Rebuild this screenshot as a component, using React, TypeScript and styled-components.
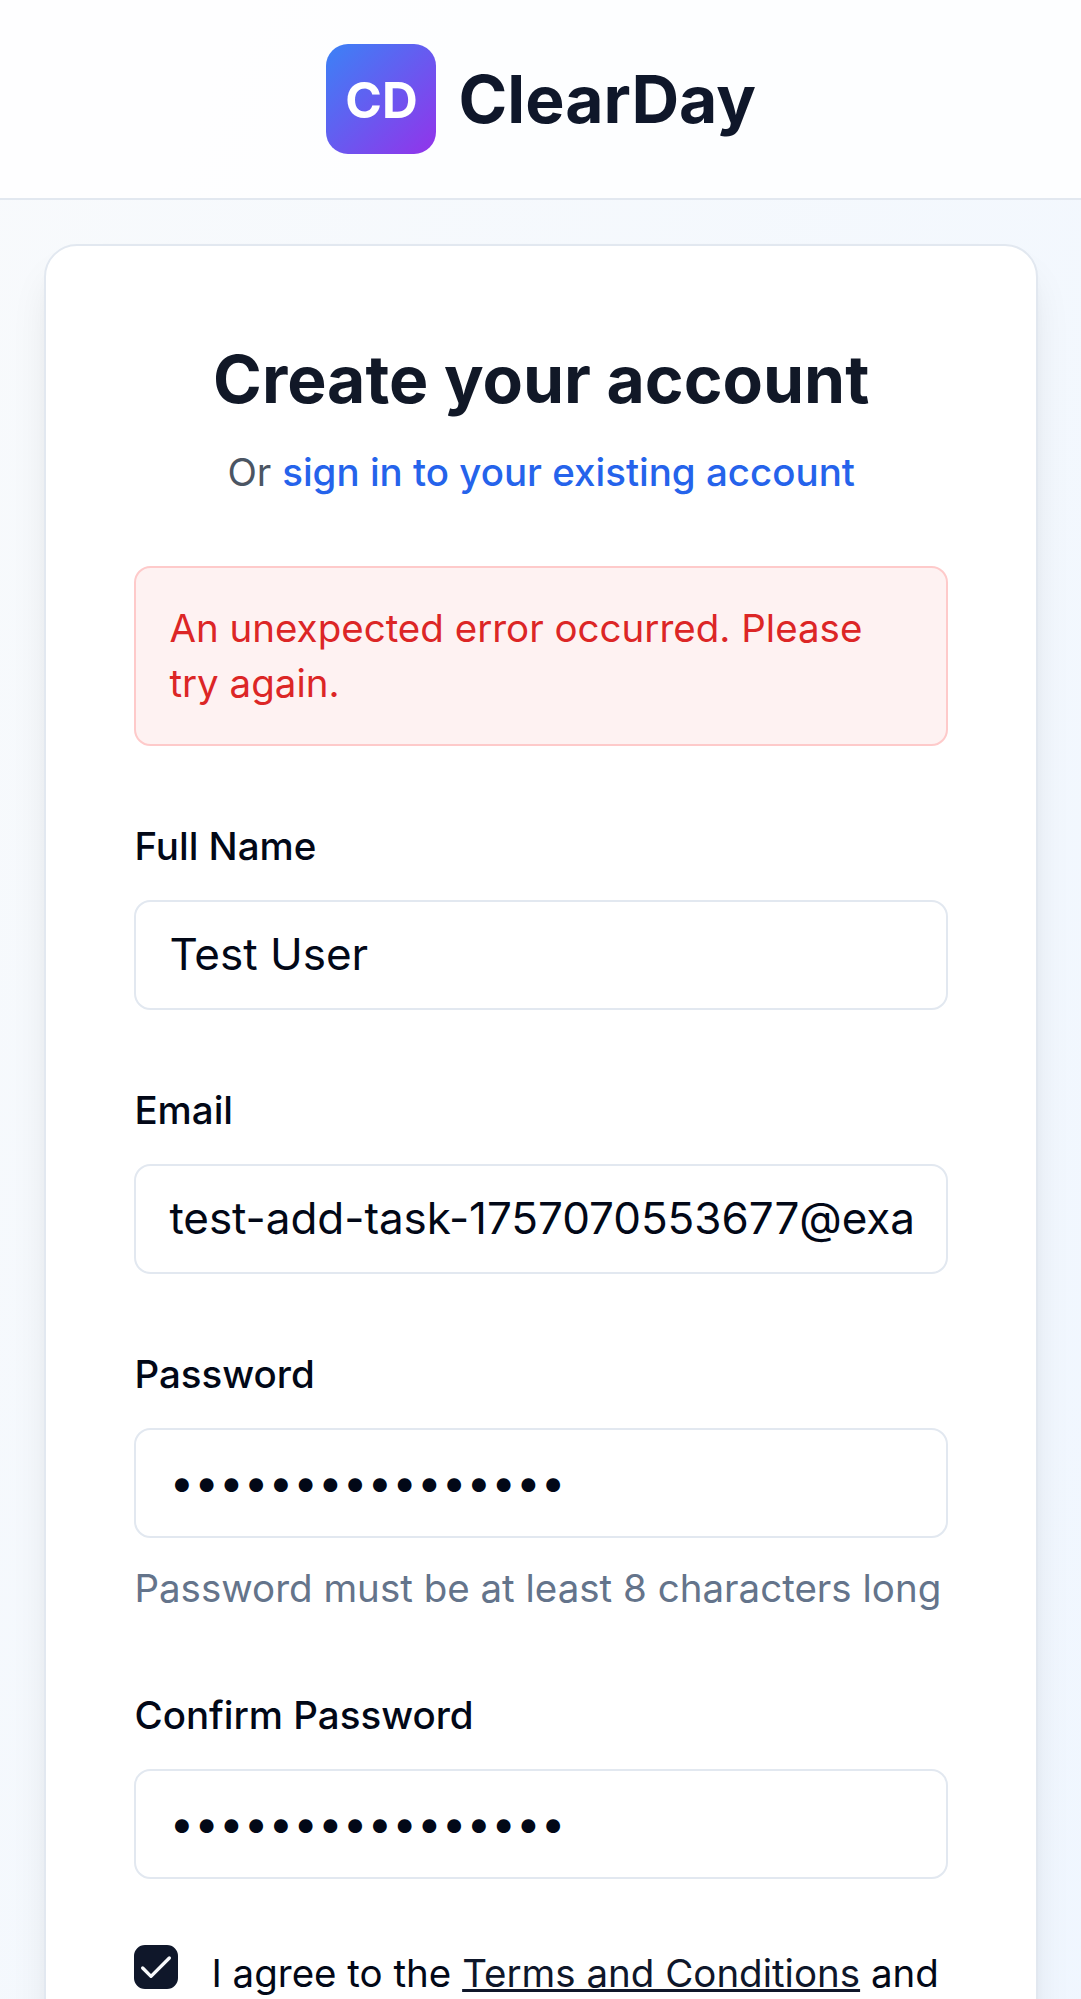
import React from "react";
import styled, { createGlobalStyle } from "styled-components";

const GlobalStyle = createGlobalStyle`
  *, *::before, *::after { box-sizing: border-box; }
  html, body { margin: 0; padding: 0; }
  body {
    font-family: Inter, "Liberation Sans", sans-serif;
    font-size: 44px;
    line-height: 66px;
    color: #020817;
  }
  h1, h2, p { margin: 0; }
`;

const Page = styled.div`
  height: 100vh;
  overflow: hidden;
  display: flex;
  flex-direction: column;
  background: linear-gradient(to bottom right, #f8fafc, #eff6ff) top left / 100% 2450px no-repeat;
`;

const Header = styled.header`
  flex: none;
  display: flex;
  align-items: flex-start;
  justify-content: center;
  gap: 22.5px;
  padding: 44px 44px 0 45px;
  height: 200px;
  background: rgba(255, 255, 255, 0.8);
  border-bottom: 2px solid #e2e8f0;
`;

const LogoMark = styled.div`
  display: flex;
  align-items: center;
  justify-content: center;
  width: 110px;
  height: 110px;
  padding: 2px 0 0 1px;
  border-radius: 22px;
  background: linear-gradient(to bottom right, #3b82f6, #9333ea);
  color: #fff;
  font-size: 49.5px;
  line-height: 77px;
  font-weight: 700;
`;

const BrandName = styled.h1`
  padding-top: 11px;
  font-size: 66px;
  line-height: 88px;
  font-weight: 700;
  color: #0f172a;
`;

const Main = styled.main`
  flex: none;
  padding: 44px 43px 44px 44px;
`;

const Card = styled.section`
  display: flex;
  flex-direction: column;
  gap: 66px;
  padding: 88.75px 88px 88px 88.4px;
  border: 2px solid #e2e8f0;
  border-radius: 33px;
  background: #fff;
  box-shadow: 0 27.5px 41.25px -8.25px rgba(0, 0, 0, 0.1),
    0 11px 16.5px -11px rgba(0, 0, 0, 0.1);
`;

const CardHeader = styled.div`
  display: flex;
  flex-direction: column;
  gap: 22px;
  text-align: center;
`;

const Title = styled.h2`
  font-size: 66px;
  line-height: 88px;
  font-weight: 700;
  color: #111827;
`;

const Subtitle = styled.p`
  font-size: 38.5px;
  line-height: 55px;
  color: #4b5563;
`;

const SignInLink = styled.a`
  font-weight: 500;
  color: #2563eb;
  text-decoration: none;
`;

const Form = styled.form`
  display: flex;
  flex-direction: column;
  gap: 66px;
`;

const Alert = styled.div`
  padding: 33px;
  border: 2px solid #fecaca;
  border-radius: 16.5px;
  background: #fef2f2;
  color: #dc2626;
  font-size: 38.5px;
  line-height: 55px;
`;

const Field = styled.div`
  display: flex;
  flex-direction: column;
  gap: 22px;
`;

const Label = styled.label`
  height: 66px;
  font-size: 38.5px;
  line-height: 68px;
  font-weight: 500;
`;

const Input = styled.input`
  width: 100%;
  height: 110px;
  padding: 20px 33px 22px;
  border: 2px solid #e2e8f0;
  border-radius: 16.5px;
  background: #fff;
  color: #020817;
  font-family: inherit;
  font-size: 44px;
  line-height: 66px;
  letter-spacing: ${(p) => (p.type === "email" ? "-0.05px" : "normal")};
  outline: none;
`;

const Hint = styled.p`
  height: 55px;
  font-size: 38.5px;
  line-height: 57px;
  color: #64748b;
`;

const ConsentRow = styled.div`
  display: flex;
  align-items: flex-start;
  gap: 33px;
`;

const CheckBox = styled.button`
  flex: none;
  display: flex;
  align-items: center;
  justify-content: center;
  width: 44px;
  height: 44px;
  padding: 2px 0 0;
  border: 2px solid #0f172a;
  border-radius: 11px;
  background: #0f172a;
  color: #f8fafc;
`;

const CheckIcon = styled.svg`
  flex: none;
  width: 40px;
  height: 40px;
`;

const ConsentText = styled.p`
  font-size: 38.5px;
  line-height: 57px;
`;

const TermsLink = styled.a`
  color: #0f172a;
  text-decoration: underline;
`;

interface FieldSpec {
  id: string;
  label: string;
  type: string;
  value: string;
  hint?: string;
}

const fields: FieldSpec[] = [
  { id: "name", label: "Full Name", type: "text", value: "Test User" },
  {
    id: "email",
    label: "Email",
    type: "email",
    value: "test-add-task-1757070553677@example.com",
  },
  {
    id: "password",
    label: "Password",
    type: "password",
    value: "TestPassword123!",
    hint: "Password must be at least 8 characters long",
  },
  {
    id: "confirm",
    label: "Confirm Password",
    type: "password",
    value: "TestPassword123!",
  },
];

export default function App() {
  return (
    <>
      <GlobalStyle />
      <Page>
        <Header>
          <LogoMark>CD</LogoMark>
          <BrandName>ClearDay</BrandName>
        </Header>
        <Main>
          <Card>
            <CardHeader>
              <Title>Create your account</Title>
              <Subtitle>
                Or <SignInLink href="#">sign in to your existing account</SignInLink>
              </Subtitle>
            </CardHeader>
            <Form>
              <Alert role="alert">
                An unexpected error occurred. Please try again.
              </Alert>
              {fields.map((f) => (
                <Field key={f.id}>
                  <Label htmlFor={f.id}>{f.label}</Label>
                  <Input id={f.id} type={f.type} defaultValue={f.value} />
                  {f.hint && <Hint>{f.hint}</Hint>}
                </Field>
              ))}
              <ConsentRow>
                <CheckBox type="button" role="checkbox" aria-checked="true">
                  <CheckIcon
                    viewBox="0 0 24 24"
                    fill="none"
                    stroke="currentColor"
                    strokeWidth="2"
                    strokeLinecap="round"
                    strokeLinejoin="round"
                  >
                    <path d="M20 6 9 17l-5-5" />
                  </CheckIcon>
                </CheckBox>
                <ConsentText>
                  I agree to the <TermsLink href="#">Terms and Conditions</TermsLink> and
                </ConsentText>
              </ConsentRow>
            </Form>
          </Card>
        </Main>
      </Page>
    </>
  );
}
